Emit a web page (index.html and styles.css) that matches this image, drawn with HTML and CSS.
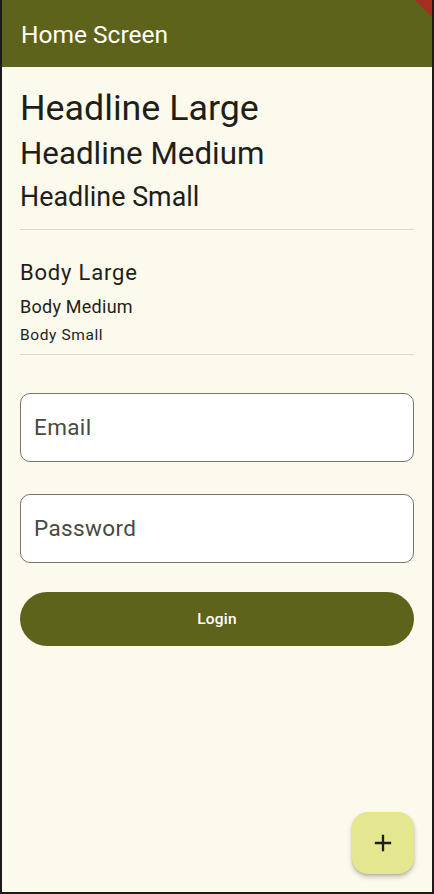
FILE: index.html
```html
<!DOCTYPE html>
<html>
<head>
<meta charset="utf-8">
<link rel="stylesheet" href="styles.css">
</head>
<body>
<div class="device">
  <header class="appbar">
    <div class="appbar-title">Home Screen</div>
  </header>
  <main class="content">
    <div class="hl">Headline Large</div>
    <div class="hm">Headline Medium</div>
    <div class="hs">Headline Small</div>
    <div class="divider d1"></div>
    <div class="bl">Body Large</div>
    <div class="bm">Body Medium</div>
    <div class="bs">Body Small</div>
    <div class="divider d2"></div>
    <div class="field email"><span class="field-label">Email</span></div>
    <div class="field password"><span class="field-label">Password</span></div>
    <button class="login">Login</button>
  </main>
  <button class="fab" aria-label="add">
    <svg width="28" height="28" viewBox="0 0 24 24"><path d="M19 13h-6v6h-2v-6H5v-2h6V5h2v6h6v2z" fill="#1d1d12"/></svg>
  </button>
  <svg class="banner" width="18" height="18" viewBox="0 0 18 18"><polygon points="1,0 18,0 18,17" fill="#a52f1f"/></svg>
</div>
</body>
</html>
```

FILE: styles.css
```css
* { box-sizing: border-box; }
html, body { margin: 0; padding: 0; background: #161616; }
.device {
  position: relative;
  width: 434px;
  height: 894px;
  border-left: 2px solid #1b1b1b;
  border-right: 2px solid #1b1b1b;
  border-bottom: 2px solid #1b1b1b;
  background: #fcf9ed;
  font-family: Roboto, "Noto Sans", sans-serif;
  color: #1f1e18;
  overflow: hidden;
}
.appbar {
  height: 67px;
  background: #5e631b;
  padding: 21px 0 0 19px;
}
.appbar-title {
  color: #ffffff;
  font-size: 24.5px;
  line-height: 28px;
}
.content {
  padding: 20px 18px 0 18px;
  display: flex;
  flex-direction: column;
}
.hl { font-size: 35.8px; line-height: 42px; }
.hm { font-size: 31.3px; line-height: 38px; margin-top: 6.3px; }
.hs { font-size: 26.8px; line-height: 32px; margin-top: 7.6px; letter-spacing: 0.05px; }
.divider { height: 1px; background: #dcd9cb; }
.d1 { margin-top: 16px; }
.bl { font-size: 22px; line-height: 28px; letter-spacing: 0.8px; margin-top: 29.5px; }
.bm { font-size: 18px; line-height: 22px; letter-spacing: 0.25px; margin-top: 8.4px; }
.bs { font-size: 15.5px; line-height: 20px; letter-spacing: 0.6px; margin-top: 6.8px; }
.d2 { margin-top: 9.3px; }
.field {
  height: 69px;
  border: 1px solid #77756a;
  border-radius: 10px;
  background: #ffffff;
  display: flex;
  align-items: center;
  padding-left: 13px;
}
.email { margin-top: 38px; }
.password { margin-top: 32px; }
.field-label {
  font-size: 22.5px;
  color: #4a4940;
  letter-spacing: 0.35px;
}
.login {
  margin-top: 29px;
  height: 54px;
  border: none;
  border-radius: 27px;
  background: #5e631b;
  color: #ffffff;
  font-family: Roboto, "Noto Sans", sans-serif;
  font-size: 15.5px;
  font-weight: 500;
  letter-spacing: 0.2px;
}
.fab {
  position: absolute;
  right: 18px;
  bottom: 18px;
  width: 62px;
  height: 62px;
  border: none;
  border-radius: 16px;
  background: #e4e78f;
  box-shadow: 0 3px 5px rgba(0,0,0,0.22), 0 1px 2px rgba(0,0,0,0.12);
  display: flex;
  align-items: center;
  justify-content: center;
  padding: 0;
}
.banner {
  position: absolute;
  top: 0;
  right: 0;
}
```
